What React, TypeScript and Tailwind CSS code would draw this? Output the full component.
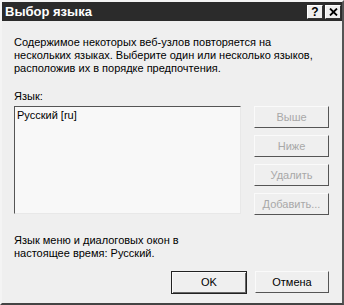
import React from 'react';

const font = { fontFamily: '"Liberation Sans", Arial, sans-serif' };

function SideButton({ label }: { label: string }) {
  return (
    <button
      disabled
      className="h-[22px] w-[75px] bg-[#efefef] text-[11px] text-[#a8a8a8] border border-t-[#fafafa] border-l-[#fafafa] border-r-[#555] border-b-[#555]"
    >
      {label}
    </button>
  );
}

export default function App() {
  return (
    <div
      style={font}
      className="w-[344px] h-[305px] bg-[#efefef] border-l-2 border-t-2 border-r-2 border-b-2 border-l-[#f4f4f4] border-t-[#f4f4f4] border-r-[#555] border-b-[#444] flex flex-col"
    >
      {/* Title bar */}
      <div className="h-[19px] bg-[#2b2b2b] flex items-center justify-between pl-[3px] pr-[1px]">
        <span className="text-white font-bold text-[13px] leading-none">Выбор языка</span>
        <div className="flex gap-[2px]">
          <div className="w-[16px] h-[14px] bg-[#efefef] border border-t-white border-l-white border-r-[#333] border-b-[#333] flex items-center justify-center text-[12px] font-bold text-black leading-none">
            ?
          </div>
          <div className="w-[16px] h-[14px] bg-[#efefef] border border-t-white border-l-white border-r-[#333] border-b-[#333] flex items-center justify-center">
            <svg width="9" height="8" viewBox="0 0 9 8">
              <path d="M1 0.5 L8 7.5 M8 0.5 L1 7.5" stroke="#000" strokeWidth="1.8" />
            </svg>
          </div>
        </div>
      </div>

      <div className="flex-1 px-[12px] pt-[15px] text-[11px] leading-[13px] text-black">
        <p>
          Содержимое некоторых веб-узлов повторяется на
          <br />
          нескольких языках. Выберите один или несколько языков,
          <br />
          расположив их в порядке предпочтения.
        </p>

        <p className="mt-[15px]">Язык:</p>

        <div className="mt-[3px] flex gap-[13px]">
          <div className="w-[227px] h-[108px] bg-[#f8f8f8] border border-t-[#555] border-l-[#555] border-r-[#e8e8e8] border-b-[#e8e8e8] px-[2px] pt-[2px]">
            Русский [ru]
          </div>
          <div className="flex flex-col gap-[7px]">
            <SideButton label="Выше" />
            <SideButton label="Ниже" />
            <SideButton label="Удалить" />
            <SideButton label="Добавить..." />
          </div>
        </div>

        <p className="mt-[19px]">
          Язык меню и диалоговых окон в
          <br />
          настоящее время: Русский.
        </p>

        <div className="mt-[11px] flex justify-end gap-[8px] pr-[1px]">
          <button className="h-[23px] w-[76px] bg-[#efefef] text-[11px] text-black border border-[#222] shadow-[inset_1px_1px_0_#fafafa,inset_-1px_-1px_0_#666]">
            OK
          </button>
          <button className="h-[22px] w-[74px] bg-[#efefef] text-[11px] text-black border border-t-[#fafafa] border-l-[#fafafa] border-r-[#555] border-b-[#555]">
            Отмена
          </button>
        </div>
      </div>
    </div>
  );
}
